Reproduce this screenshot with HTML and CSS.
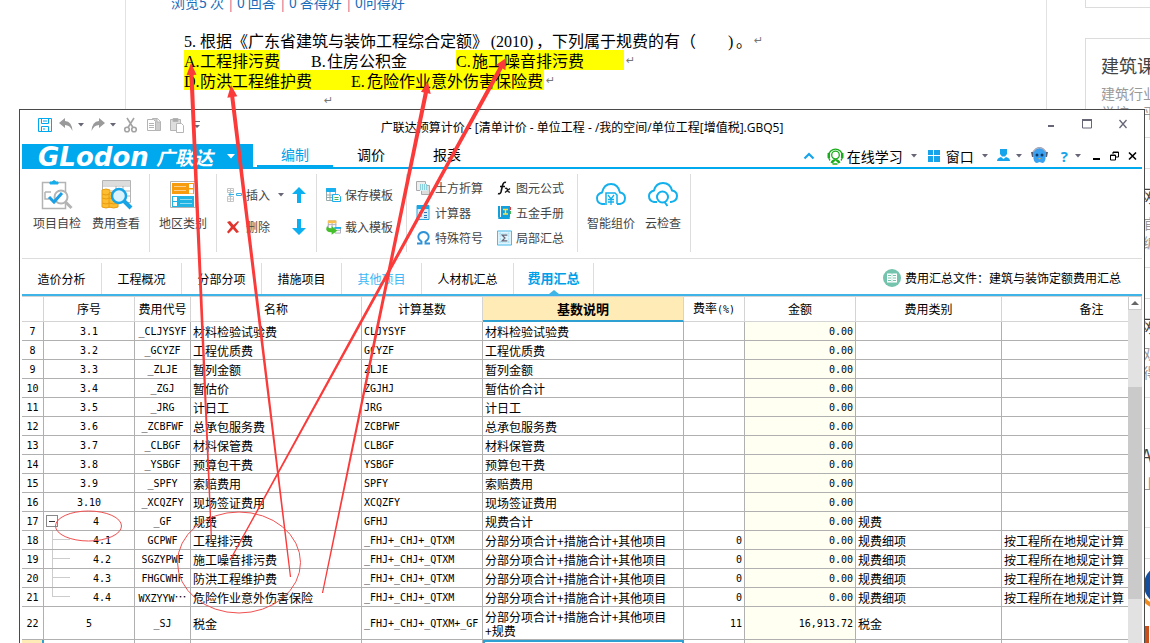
FILE: index.html
```html
<!DOCTYPE html>
<html lang="zh-CN">
<head>
<meta charset="utf-8">
<title>广联达预算计价</title>
<meta name="viewport" content="width=device-width, initial-scale=1">
<link rel="stylesheet" href="styles.css">
</head>
<body>
<div class="desktop">
  <div class="site">
    <main class="article">
      <p class="stats">浏览5 次 <i>|</i> 0 回答 <i>|</i> 0 答得好 <i>|</i> 0问得好</p>
      <div class="question">
        <p class="line"><span><b>5.</b>根据《广东省建筑与装饰工程综合定额》<b class="year">(2010)</b>，下列属于规费的有（</span><span class="blank"></span><span><b class="close">)</b>。</span><em>↵</em></p>
        <p class="line"><mark class="opt-a"><b>A.</b>工程排污费</mark><span class="opt-b"><b>B.</b>住房公积金</span><mark class="opt-c"><b>C.</b>施工噪音排污费</mark><em>↵</em></p>
        <p class="line"><mark class="opt-d"><b>D.</b>防洪工程维护费</mark><mark class="opt-e"><b>E.</b>危险作业意外伤害保险费</mark><em>↵</em></p>
        <p class="line last"><em>↵</em></p>
      </div>
    </main>
    <aside class="sidebar">
      <section class="card first"></section>
      <section class="card"><h2>建筑课堂</h2><p>建筑行业</p><p>学校、平台</p></section>
      <section class="card"><h2>建筑网校</h2><p>建筑行官方</p><p>造价师编</p></section>
      <section class="card"><h2>工程网站</h2><p>工程人双</p><p>学习心得</p></section>
      <section class="card"><h2>软件 A</h2><p>软件行上</p></section>
      <section class="card logo">
        <svg width="60" height="86" viewBox="0 0 60 86"><circle cx="63" cy="26" r="17" fill="none" stroke="#134f9c" stroke-width="6"/><path d="M56 22h10" stroke="#134f9c" stroke-width="3"/><path d="M43 40q6 9 24 9" fill="none" stroke="#f08c1e" stroke-width="4"/><rect x="44" y="67" width="4" height="19" fill="#c8501c"/></svg>
      </section>
    </aside>
  </div>

  <div class="window">
    <header class="titlebar">
      <div class="quick">
        <button aria-label="保存"><svg width="14" height="14" viewBox="0 0 14 14" fill="none" stroke="#00a8ee"><path d="M.5.5h13v13H.5zM3.500.5v5h7v-5M3.500 13.500v-5h7v5M5 3h4M5 11h2" /></svg></button>
        <button aria-label="撤销"><svg width="14" height="14" viewBox="0 0 14 14"><path d="M0 5L6 0v3q7 .5 7.500 10Q11 7 6 7v3z" fill="#9a9a9a"/></svg><svg class="caret" width="6" height="4" viewBox="0 0 6 4"><path d="M0 0h6L3 3.500z"/></svg></button>
        <button aria-label="恢复"><svg width="14" height="14" viewBox="0 0 14 14"><path d="M14 5L8 0v3Q1 3.500.5 13 3 7 8 7v3z" fill="#9a9a9a"/></svg><svg class="caret" width="6" height="4" viewBox="0 0 6 4"><path d="M0 0h6L3 3.500z"/></svg></button>
        <button aria-label="剪切"><svg width="16" height="16" viewBox="0 0 16 16" fill="none" stroke="#a3a3a3" stroke-width="1.600"><path d="M4 1l6 9.500M11 1L5 10.500"/><circle cx="4" cy="12.500" r="2.300"/><circle cx="11" cy="12.500" r="2.300"/></svg></button>
        <button aria-label="复制"><svg width="16" height="16" viewBox="0 0 16 16" fill="#fff" stroke="#b4b4b4"><path d="M6.500 1.500h5l3 3v9h-8z" fill="#ccc"/><path d="M11 1.500v3.500h3.500" /><path d="M1.500 2.500h6l2 2v9h-8zM3 6.500h5M3 8.500h5M3 10.500h5"/></svg></button>
        <button aria-label="粘贴"><svg width="16" height="16" viewBox="0 0 16 16" fill="#ddd" stroke="#b5b5b5"><path d="M1.500 2.500h10v11h-10z"/><path d="M4 1.500h5v3H4z" fill="#aaa"/><path d="M7.500 6.500h5l2 2v7h-7z" fill="#fff"/></svg></button>
        <button aria-label="更多"><svg class="caret" width="8" height="8" viewBox="0 0 8 8"><path d="M2 0h6v1H2zM2 4h6L5 7z"/></svg></button>
      </div>
      <h1>广联达预算计价 - [清单计价 - 单位工程 - /我的空间/单位工程[增值税].GBQ5]</h1>
      <div class="controls">
        <button aria-label="最小化"><svg width="10" height="10" viewBox="0 0 10 10"><path d="M2 6h6v2H2z" fill="#667"/></svg></button>
        <button aria-label="最大化"><svg width="10" height="10" viewBox="0 0 10 10"><path d="M.5 1h9v8h-9z" fill="none" stroke="#667"/><path d="M0 0h10v2H0z" fill="#667"/></svg></button>
        <button aria-label="关闭"><svg width="10" height="10" viewBox="0 0 10 10"><path d="M1.500 1l7 8M8.500 1l-7 8" stroke="#667" stroke-width="1.300"/></svg></button>
      </div>
    </header>

    <nav class="menubar">
      <button class="brand"><span class="latin">GLodon</span><span class="han">广联达</span><svg width="8" height="5" viewBox="0 0 8 5"><path d="M0 0h8L4 4.500z" fill="#fff"/></svg></button>
      <button class="menu-tab active">编制</button><button class="menu-tab">调价</button><button class="menu-tab">报表</button>
      <div class="tools">
        <button class="fold" aria-label="收起"><svg width="12" height="8" viewBox="0 0 12 8"><path d="M1.500 6.500L6 2l4.500 4.500" fill="none" stroke="#18a4ea" stroke-width="2.200"/></svg></button>
        <button class="study"><svg width="17" height="18" viewBox="0 0 17 18" fill="none" stroke="#1cab1c"><path d="M3 13.500A7 7 0 1 1 14 13.500" stroke-width="1.400"/><circle cx="8.500" cy="8" r="3.800" stroke-width="1.300"/><path d="M1.800 6v5M15.200 6v5" stroke-width="2.500"/><path d="M3.500 15.500q1.500-3.500 5-3.500t5 3.500l-2 1-3-3-3 3z" fill="#1cab1c" stroke="none"/><path d="M5.500 17h5" stroke-width="1.500"/></svg>在线学习<svg class="caret" width="6" height="4" viewBox="0 0 6 4"><path d="M0 0h6L3 3.500z"/></svg></button>
        <button class="win"><svg width="12" height="12" viewBox="0 0 12 12" fill="#18a4ea"><path d="M0 0h5v5H0zM6 0h6v5H6zM0 6h5v6H0zM6 6h6v6H6z"/></svg>窗口<svg class="caret" width="6" height="4" viewBox="0 0 6 4"><path d="M0 0h6L3 3.500z"/></svg></button>
        <button class="user" aria-label="用户"><svg width="13" height="13" viewBox="0 0 13 13" fill="#18a4ea"><path d="M3 0h7v5L8 7.500H5L3 5zM0 12q0-3 4-4l2.500 2L9 8q4 1 4 4z"/></svg><svg class="caret" width="6" height="4" viewBox="0 0 6 4"><path d="M0 0h6L3 3.500z"/></svg></button>
        <button aria-label="助手"><svg width="17" height="17" viewBox="0 0 17 17"><path d="M2.500 4q6-6 12 0v8q-1 4-3 4L8.500 15 6 16q-2.500 0-3.500-4z" fill="#3aa0f0"/><path d="M2 5q6.500-9 13 0" fill="none" stroke="#aab" stroke-width="1.500"/><path d="M0 5h2.500v5H1zM14.500 5H17l-1 5h-1.500z" fill="#58617a"/><circle cx="6" cy="8" r="1.500" fill="#123a66"/><circle cx="11" cy="8" r="1.500" fill="#123a66"/><path d="M7 11h3l-1.500 1.500z" fill="#f6a820"/></svg></button>
        <button class="help" aria-label="帮助">?<svg class="caret" width="6" height="4" viewBox="0 0 6 4"><path d="M0 0h6L3 3.500z"/></svg></button>
        <button aria-label="最小化文档"><svg width="9" height="10" viewBox="0 0 9 10"><path d="M1 7h7v2H1z"/></svg></button>
        <button aria-label="还原文档"><svg width="9" height="10" viewBox="0 0 9 10" fill="none" stroke="#000"><path d="M3 3V1h5.500v5H6M3 1.500h5M.5 4h5v5h-5zM.5 4.500h5"/></svg></button>
        <button aria-label="关闭文档"><svg width="9" height="10" viewBox="0 0 9 10"><path d="M1 1.500l7 7M8 1.500l-7 7" stroke="#000" stroke-width="1.600"/></svg></button>
      </div>
    </nav>

    <div class="ribbon">
      <div class="group g-check">
        <button class="big"><svg width="34" height="32" viewBox="0 0 34 32" fill="none"><path d="M2.500 4.500h23v26h-23z" fill="#fff" stroke="#b4b4b4" stroke-width="1.500"/><path d="M10 6V4h2q2-3 4 0h2v2z" fill="#16aeea" stroke="#16aeea"/><path d="M5 14h6M5 14v7h4" stroke="#b4b4b4" stroke-width="1.500"/><circle cx="21" cy="19" r="6.500" fill="#fff" stroke="#b4b4b4" stroke-width="2"/><path d="M25.500 24l6 6" stroke="#b4b4b4" stroke-width="3"/><path d="M9 19l5 5 8-9" stroke="#1b9fe6" stroke-width="3"/></svg>项目自检</button>
        <button class="big"><svg width="34" height="32" viewBox="0 0 34 32" fill="none"><path d="M3.500 2.500h28v22h-28z" fill="#fff" stroke="#b4b4b4"/><path d="M4 3h27v4H4z" fill="#ddd"/><path d="M3 8h28M12 13h19M12 18h19M17 8v16M24 8v16" stroke="#b4b4b4"/><g fill="#fdbd31" stroke="#e89c10"><path d="M3 12q4-2 8 0v17q-4 2-8 0z"/><path d="M10 15q5-2 9 0v14q-4 2-9 0z"/><path d="M3 16q4 2 8 0M3 20q4 2 8 0M3 25q4 2 8 0M10 20q5 2 9 0M10 25q5 2 9 0"/></g><circle cx="20" cy="18" r="7" fill="#d9f2fc" stroke="#16a4e6" stroke-width="2.500"/><path d="M25 23l7 7" stroke="#16a4e6" stroke-width="4"/></svg>费用查看</button>
      </div>
      <div class="group g-area">
        <button class="big"><svg width="28" height="32" viewBox="0 0 28 32"><path d="M1.500 3.500h25v26h-25z" fill="#fff" stroke="#b4b4b4"/><path d="M3 5h22v11H3z" fill="#f79d0d"/><path d="M5 8.500h12M5 12.500h12" stroke="#fdd08a"/><path d="M20 6h4v4h-4zM20 11.500h4v4h-4z" fill="#fff"/><path d="M3 18h22v11H3z" fill="#1fb4e4"/><path d="M11 21.500h12M11 25.500h12" stroke="#8fdcf2"/><path d="M4 19h4v4H4zM4 24h4v4H4z" fill="#fff"/></svg>地区类别</button>
      </div>
      <div class="group g-edit">
        <button class="small"><svg width="16" height="16" viewBox="0 0 16 16" fill="none"><path d="M1.500 1.500h6v4h-6zM1.500 9.500h6v5h-6zM4.500 1v4M4.500 10v5M1 3.500h6M1 12h6" stroke="#c4c4c4"/><path d="M3 7.500h5M5 5.500L3 7.500l2 2M10.500 6.500h5v2h-5z" stroke="#36b2e8"/></svg>插入<svg class="caret" width="6" height="4" viewBox="0 0 6 4"><path d="M0 0h6L3 3.500z"/></svg></button>
        <button class="small" aria-label="上移"><svg width="14" height="16" viewBox="0 0 14 16"><path d="M7 0l7 7H9v9H5V7H0z" fill="#0cb0f0"/></svg></button>
        <button class="small"><svg width="16" height="16" viewBox="0 0 16 16"><path d="M1 3l3-1 3.500 4L12 2l1 1-4 5 4 5-2.500 1L7 10l-4.500 4.500L1 13l4-5z" fill="#e0342c"/></svg>删除</button>
        <button class="small" aria-label="下移"><svg width="14" height="16" viewBox="0 0 14 16"><path d="M7 16l7-7H9V0H5v9H0z" fill="#0cb0f0"/></svg></button>
      </div>
      <div class="group g-template">
        <button class="small"><svg width="15" height="16" viewBox="0 0 15 16" fill="#fff" stroke="#9aa"><path d="M.5 1.500h9v12h-9zM.5 8h9M.5 10.500h9M4 2v12"/><path d="M.5 1.500h9v3h-9z" fill="#18b0ee" stroke="#18b0ee"/><path d="M6.500 7.500h6l2 2v5h-8z" stroke="#18b0ee"/><path d="M8.500 10.500h4M8.500 12.500h4" stroke="#4ab44a"/></svg>保存模板</button>
        <button class="small"><svg width="15" height="16" viewBox="0 0 16 16" fill="#fff" stroke="#aab"><path d="M2.500 1.500h8v8h-8zM2 5.500h9M6.500 2v8"/><path d="M2 1h9v3H2z" fill="#f8c04c" stroke="none"/><path d="M9.500 8.500h6v6h-6zM9.500 11.500h6"/><path d="M9 8h7v2H9z" fill="#18b0ee" stroke="none"/><path d="M1.500 6q0 3.500 4.500 3.500V7l6 5-6 4.300v-2.800Q-2.500 14 1.500 6z" fill="#45c02c" stroke="none"/></svg>载入模板</button>
      </div>
      <div class="group g-utils">
        <button class="small"><svg width="15" height="16" viewBox="0 0 15 16"><path d="M.5 1.500h9v9h-9z" fill="#eee" stroke="#aaa"/><path d="M5.500 5.500h8v9h-8z" fill="#ddd" stroke="#aaa"/><path d="M4 4h7v7H4z" fill="#d8f0f4"/><path d="M4 5h7M4 7h7M4 9h7" stroke="#3fb0c4" stroke-dasharray="1 1"/></svg>土方折算</button>
        <button class="small"><svg width="15" height="15" viewBox="0 0 15 15"><path d="M1 .5h12v14h-12z" fill="#d8f0fb" stroke="#2ca4de"/><path d="M1 0h12v4H1z" fill="#18a8e4"/><path d="M3 7.500h3M8 7.500h3M3 11h3M8 10.500h3M8 12.500h3" stroke="#3276b8"/></svg>计算器</button>
        <button class="small"><svg width="15" height="14" viewBox="0 0 15 14"><path d="M1 12.500h4.500v-2Q1.500 8 2.500 4.500 4 1 7.500 1t5 3.500q1 3.500-3 6v2H14" fill="none" stroke="#2f92d6" stroke-width="1.900"/></svg>特殊符号</button>
        <button class="small"><svg width="15" height="14" viewBox="0 0 15 14" fill="none" stroke="#111"><path d="M9 1.500q-2.500-1-3.500 3L4 11q-1 2.500-3 1.500M3 5.500h5" stroke-width="1.600"/><path d="M8 7.500q2-1 2.500 1.500t2.500 2M13 7.500l-5 4" stroke-width="1.300"/></svg>图元公式</button>
        <button class="small"><svg width="15" height="15" viewBox="0 0 15 15"><path d="M1 1h12v11H1z" fill="#12a0dc"/><path d="M1.500 12.500h11v1h-11z" fill="#fff" stroke="#12a0dc"/><path d="M3.500 1v11" stroke="#fff"/><path d="M6 4.500h5M8.500 4v5M6 9h5" fill="none" stroke="#ffe14a" stroke-width="1.300"/><path d="M13 2h1v3h-1z" fill="#e33"/><path d="M13 6h1v3h-1z" fill="#4b4"/></svg>五金手册</button>
        <button class="small"><svg width="15" height="16" viewBox="0 0 16 16"><path d="M.5.500h15v15H.5z" fill="#dff4fc" stroke="#3cb4e8"/><path d="M2 3.500h12M2 12.500h12M3.500 2v12M12.500 2v12" stroke="#a9dff5" stroke-dasharray="2 1"/><path d="M11 5H5.500L8.500 8l-3 3H11" fill="none" stroke="#667" stroke-width="1.300"/></svg>局部汇总</button>
      </div>
      <div class="group g-cloud">
        <button class="big"><svg width="32" height="32" viewBox="0 0 32 32" fill="none" stroke="#12b0ec" stroke-width="1.900"><path d="M10 26H7q-5-1-5-6 0-4 5-5.500Q9 6 16 6t9 8.500q5 1 5 5.500 0 5-5 6h-3"/><path d="M11 27V15h9l2 2v9" stroke-width="1.500"/><path d="M13 17l3 4 3-4M16 21v6M13 21.500h6M13 24h6" stroke-width="1.300"/></svg>智能组价</button>
        <button class="big"><svg width="32" height="32" viewBox="0 0 32 32" fill="none" stroke="#12b0ec" stroke-width="2"><path d="M10 24H7q-5-1-5-6 0-4 5-5.500Q9 5 16 5t9 7.500q5 1 5 5.500 0 5-6 6h-1"/><circle cx="15.500" cy="19" r="5.500"/><path d="M17.500 24l3 4"/></svg>云检查</button>
      </div>
    </div>

    <nav class="doc-tabs">
      <button>造价分析</button><button>工程概况</button><button>分部分项</button><button>措施项目</button><button class="linked">其他项目</button><button class="wide">人材机汇总</button><button class="current">费用汇总</button>
      <div class="file"><svg width="18" height="18" viewBox="0 0 18 18"><circle cx="9" cy="9" r="9" fill="#74c3ac"/><path d="M4 4.500h4.500L9 5l.5-.5H14v9H9.500L9 14l-.5-.5H4z" fill="#fff"/><path d="M5 6.500h3M5 9h3M5 11.500h3M10 6.500h3M10 9h3M10 11.500h3" stroke="#74c3ac"/><path d="M9 5v9" stroke="#b5dfd3" stroke-width=".8"/></svg>费用汇总文件：建筑与装饰定额费用汇总</div>
    </nav>

    <div class="sheet">
      <div class="grid">
        <table>
          <colgroup><col class="c-no"><col class="c-seq"><col class="c-code"><col class="c-name"><col class="c-base"><col class="c-desc"><col class="c-rate"><col class="c-sum"><col class="c-kind"><col class="c-note"></colgroup>
          <thead><tr><th></th><th>序号</th><th>费用代号</th><th>名称</th><th>计算基数</th><th class="picked">基数说明</th><th>费率<span class="mono">(%)</span></th><th>金额</th><th>费用类别</th><th>备注</th></tr></thead>
          <tbody>
            <tr><th>7</th><td>3.1</td><td>_CLJYSYF</td><td>材料检验试验费</td><td>CLJYSYF</td><td>材料检验试验费</td><td></td><td>0.00</td><td></td><td></td></tr>
            <tr><th>8</th><td>3.2</td><td>_GCYZF</td><td>工程优质费</td><td>GCYZF</td><td>工程优质费</td><td></td><td>0.00</td><td></td><td></td></tr>
            <tr><th>9</th><td>3.3</td><td>_ZLJE</td><td>暂列金额</td><td>ZLJE</td><td>暂列金额</td><td></td><td>0.00</td><td></td><td></td></tr>
            <tr><th>10</th><td>3.4</td><td>_ZGJ</td><td>暂估价</td><td>ZGJHJ</td><td>暂估价合计</td><td></td><td>0.00</td><td></td><td></td></tr>
            <tr><th>11</th><td>3.5</td><td>_JRG</td><td>计日工</td><td>JRG</td><td>计日工</td><td></td><td>0.00</td><td></td><td></td></tr>
            <tr><th>12</th><td>3.6</td><td>_ZCBFWF</td><td>总承包服务费</td><td>ZCBFWF</td><td>总承包服务费</td><td></td><td>0.00</td><td></td><td></td></tr>
            <tr><th>13</th><td>3.7</td><td>_CLBGF</td><td>材料保管费</td><td>CLBGF</td><td>材料保管费</td><td></td><td>0.00</td><td></td><td></td></tr>
            <tr><th>14</th><td>3.8</td><td>_YSBGF</td><td>预算包干费</td><td>YSBGF</td><td>预算包干费</td><td></td><td>0.00</td><td></td><td></td></tr>
            <tr><th>15</th><td>3.9</td><td>_SPFY</td><td>索赔费用</td><td>SPFY</td><td>索赔费用</td><td></td><td>0.00</td><td></td><td></td></tr>
            <tr><th>16</th><td>3.10</td><td>_XCQZFY</td><td>现场签证费用</td><td>XCQZFY</td><td>现场签证费用</td><td></td><td>0.00</td><td></td><td></td></tr>
            <tr><th>17</th><td class="node"><div class="tree"><button class="toggle" aria-label="折叠"></button><span>4</span></div></td><td>_GF</td><td>规费</td><td>GFHJ</td><td>规费合计</td><td></td><td>0.00</td><td>规费</td><td></td></tr>
            <tr><th>18</th><td class="node"><div class="tree"><i class="branch"></i><span>4.1</span></div></td><td>GCPWF</td><td>工程排污费</td><td>_FHJ+_CHJ+_QTXM</td><td>分部分项合计+措施合计+其他项目</td><td>0</td><td>0.00</td><td>规费细项</td><td>按工程所在地规定计算</td></tr>
            <tr><th>19</th><td class="node"><div class="tree"><i class="branch"></i><span>4.2</span></div></td><td>SGZYPWF</td><td>施工噪音排污费</td><td>_FHJ+_CHJ+_QTXM</td><td>分部分项合计+措施合计+其他项目</td><td>0</td><td>0.00</td><td>规费细项</td><td>按工程所在地规定计算</td></tr>
            <tr><th>20</th><td class="node"><div class="tree"><i class="branch"></i><span>4.3</span></div></td><td>FHGCWHF</td><td>防洪工程维护费</td><td>_FHJ+_CHJ+_QTXM</td><td>分部分项合计+措施合计+其他项目</td><td>0</td><td>0.00</td><td>规费细项</td><td>按工程所在地规定计算</td></tr>
            <tr><th>21</th><td class="node"><div class="tree"><i class="branch end"></i><span>4.4</span></div></td><td>WXZYYW<span class="dots">…</span></td><td>危险作业意外伤害保险</td><td>_FHJ+_CHJ+_QTXM</td><td>分部分项合计+措施合计+其他项目</td><td>0</td><td>0.00</td><td>规费细项</td><td>按工程所在地规定计算</td></tr>
            <tr class="tall"><th>22</th><td>5</td><td>_SJ</td><td>税金</td><td>_FHJ+_CHJ+_QTXM+_GF</td><td>分部分项合计+措施合计+其他项目<br>+规费</td><td>11</td><td>16,913.72</td><td>税金</td><td></td></tr>
            <tr class="selected"><th></th><td></td><td></td><td></td><td></td><td></td><td></td><td></td><td></td><td></td></tr>
          </tbody>
        </table>
      </div>
      <div class="scrollbar">
        <button aria-label="向上滚动"><svg width="8" height="4" viewBox="0 0 8 4"><path d="M0 4l4-4 4 4z" fill="#666"/></svg></button>
        <div class="thumb"></div>
      </div>
    </div>
  </div>

  <svg class="marks" width="1150" height="643" viewBox="0 0 1150 643">
    <g fill="#fb3a3a">
      <path d="M191 63L196.500 74.800 193.600 75 212.100 541H210.900L189.400 75 186.500 75.200z"/>
      <path d="M231 85L237.300 96.300 234.300 96.800 291.100 577H289.900L230.300 97.300 227.300 97.700z"/>
      <path d="M428 82L430.700 93.900 427.900 93.300 323.100 593H321.900L423.800 92.400 420.900 91.700z"/>
      <path d="M506 58L505.500 70.300 502.600 68.600 230.600 560.500 229.500 560 498.900 66.600 496 65z"/>
    </g>
    <g fill="none" stroke="#f05050"><ellipse cx="88.500" cy="526" rx="33" ry="15"/><ellipse cx="239" cy="562.500" rx="61.500" ry="50.500"/></g>
  </svg>
</div>
</body>
</html>
```
FILE: styles.css
```css
* { box-sizing: border-box; }
body { margin: 0; background: #fff; color: #000; font: 12px/14px "Noto Sans CJK SC", sans-serif; overflow: hidden; }
h1, h2, p { margin: 0; font-weight: normal; }
button { padding: 0; border: 0; background: none; color: inherit; font: inherit; white-space: nowrap; }
svg { flex: none; }
.desktop { position: relative; height: 100vh; overflow: hidden; }
.caret { fill: #667; }

/* page behind the window */
.site { display: flex; height: 100%; padding-left: 125px; }
.article { flex: 1; border: solid #e2e2e2; border-width: 0 1px; white-space: nowrap; }
.stats { margin-top: -9px; padding-left: 45px; color: #1b6db9; font-size: 14px; line-height: 22px; }
.stats i { padding: 0 1px 0 2px; color: #c65b8e; font-style: normal; }
.question { padding: 17px 0 0 58px; font-size: 16px; }
.line { display: flex; height: 20px; line-height: 20px; }
.line b { display: inline-block; min-width: 16px; font: 16px/20px "Liberation Serif", serif; }
.line .year { min-width: 48px; text-align: center; }
.line .close { min-width: 8px; }
.line em { padding-left: 2px; color: #777; font: 11px/22px "DejaVu Sans", sans-serif; }
.line mark { background: #ff0; color: inherit; }
.blank { width: 32px; }
.opt-a { width: 96px; margin-right: 31px; }
.opt-b { width: 145px; }
.opt-c { width: 168px; }
.opt-d { width: 167px; }
.opt-e { width: 193px; }
.last { padding-left: 138px; }
.sidebar { width: 103px; padding-left: 38px; white-space: nowrap; overflow: hidden; }
.card { width: 200px; height: 100px; margin-bottom: 30px; padding: 15px; border: 1px solid #dcdcdc; }
.card.first { margin-top: -92px; }
.card h2 { margin-bottom: 8px; color: #444; font-size: 18px; line-height: 22px; }
.card p { color: #999; font-size: 14px; line-height: 19px; }
.card.logo { padding: 0 0 0 15px; }

/* application window */
.window { position: absolute; top: 109px; right: 5px; bottom: 0; left: 19px; display: flex; flex-direction: column; padding: 0 2px; border: 1px solid #4a4a4a; border-bottom: 0; background: #fff; }
.titlebar { display: grid; grid-template-columns: 1fr auto 1fr; align-items: center; height: 34px; }
.titlebar h1 { padding-top: 1px; font-family: "Open Sans", "Noto Sans CJK SC", sans-serif; font-size: 12px; line-height: 18px; }
.quick { display: flex; align-items: center; gap: 7px; padding: 0 0 4px 16px; }
.quick button { display: flex; align-items: center; gap: 5px; }
.controls { display: flex; justify-content: flex-end; gap: 26px; padding: 0 14px 6px 0; }
.controls svg { display: block; }
.menubar { display: flex; height: 25px; border-bottom: 2px solid #00a8ee; font-size: 14px; }
.brand { display: flex; align-items: center; width: 231px; margin: 0 4px -2px 0; padding-left: 16px; background: #00a8ee; color: #fff; }
.brand .latin { width: 118px; text-align: left; font: italic bold 26px/24px "DejaVu Sans", sans-serif; }
.brand .han { width: 71px; text-align: left; font-size: 19px; font-style: italic; font-weight: bold; line-height: 22px; }
.menu-tab { width: 76px; margin-bottom: -2px; padding-bottom: 1px; border-bottom: 4px solid transparent; }
.menu-tab.active { border-color: #00a8ee; color: #00a0e8; }
.tools { display: flex; align-items: center; gap: 9px; margin-left: auto; padding-right: 5px; }
.tools button { display: flex; align-items: center; gap: 3px; line-height: 20px; }
.tools .caret { margin-left: 5px; }
.tools .fold { margin-right: 3px; }
.tools .win { gap: 6px; }
.tools .win .caret { margin-left: 2px; }
.tools .study { margin-right: 2px; }
.tools .user .caret { margin-left: 3px; }
.tools .help { margin: 0 2px 0 4px; gap: 2px; color: #18a4ea; font: bold 15px/18px "Open Sans", sans-serif; }
.ribbon { display: flex; height: 90px; padding: 5px 0 6px; border-bottom: 1px solid #ddd; color: #444; }
.group { border-right: 1px solid #ddd; }
.big { display: flex; flex-direction: column; align-items: center; gap: 4px; line-height: 18px; }
.small { display: flex; align-items: center; gap: 4px; line-height: 18px; }
.g-check, .g-area, .g-cloud { display: flex; padding-top: 4px; }
.g-check { width: 128px; gap: 11px; padding-left: 11px; }
.g-area { width: 67px; padding-left: 9px; }
.g-edit { display: grid; grid-template: 32px 32px / 66px 14px; align-content: start; width: 100px; padding: 5px 0 0 9px; }
.g-edit .caret { margin-left: 4px; }
.g-template { display: grid; grid-template-rows: 32px 32px; align-content: start; width: 90px; padding: 5px 0 0 9px; }
.g-utils { display: grid; grid-template: 25px 25px 25px / 81px 80px; grid-auto-flow: column; align-content: start; width: 171px; padding: 1px 0 0 9px; }
.g-cloud { width: 113px; gap: 10px; padding-left: 9px; }
.doc-tabs { display: flex; height: 37px; padding-top: 4px; border-bottom: 2px solid #3fb4e6; }
.doc-tabs button { width: 80px; border-right: 1px solid #ddd; }
.doc-tabs .wide { width: 92px; }
.doc-tabs .linked { color: #3db8f5; }
.doc-tabs .current { position: relative; padding-bottom: 2px; color: #00a0e8; font-size: 13px; font-weight: bold; }
.doc-tabs .current::after { content: ""; position: absolute; bottom: 0; left: 50%; margin-left: -5px; border: 5px solid transparent; border-top: 0; border-bottom: 4px solid #3fb4e6; }
.file { display: flex; align-items: center; gap: 4px; margin-left: auto; padding: 0 21px 2px 0; }

/* cost table */
.sheet { display: flex; flex: 1; min-height: 0; }
.grid { flex: 1; min-width: 0; overflow: hidden; }
table { width: 1160px; table-layout: fixed; border-spacing: 0; }
.c-no { width: 22px; } .c-seq { width: 91px; } .c-code { width: 56px; } .c-name { width: 171px; } .c-base { width: 121px; }
.c-desc { width: 201px; } .c-rate { width: 61px; } .c-sum { width: 111px; } .c-kind { width: 146px; } .c-note { width: 180px; }
th, td { height: 19px; padding: 2px 2px 0; border: solid #b0b0b0; border-width: 0 1px 1px 0; white-space: nowrap; text-align: left; font-weight: normal; }
thead th { height: 26px; padding: 0; border-top: 1px solid #d4d4d4; border-color: #d4d4d4; text-align: center; }
thead .picked { border-bottom: 2px solid #2fa0d2; background: #ffebb5; font-size: 13px; font-weight: bold; }
tbody th, td:nth-child(2), td:nth-child(3), td:nth-child(5), td:nth-child(7), td:nth-child(8), .mono { font-family: "DejaVu Sans Mono", monospace; font-size: 10px; }
tbody th, td:nth-child(2), td:nth-child(3) { padding: 2px 0 0; text-align: center; }
td:nth-child(7), td:nth-child(8) { text-align: right; }
td:nth-child(8) { background: #fffff2; }
.tall td, .tall th { height: 33px; }
.dots { font: 12px/14px "Noto Sans CJK SC", sans-serif; }
tbody td.node { padding: 0; }
.tree { display: flex; align-items: center; height: 18px; }
.tree span { flex: 1; padding-top: 2px; }
.toggle { width: 12px; height: 12px; margin-left: 2px; border: 1px solid #888; background: linear-gradient(#333, #333) center / 6px 1px no-repeat; }
.branch { width: 26px; height: 18px; background: linear-gradient(#ccc, #ccc) 8px 0 / 1px 18px no-repeat, linear-gradient(#ccc, #ccc) 8px 8px / 18px 1px no-repeat; }
.branch.end { background-size: 1px 9px, 18px 1px; }
.selected th { background: #ffebb5; border-right: 2px solid #2fa0d2; }
.selected td:nth-child(6) { border: solid #2fa0d2; border-width: 2px 2px 0; }
.scrollbar { width: 14px; background: #e2e2e2; }
.scrollbar button { display: flex; align-items: center; justify-content: center; width: 14px; height: 14px; border: 1px solid #ccc; background: #fff; }
.thumb { height: 61%; margin-top: 77px; background: #cacaca; }

/* hand-drawn annotations */
.marks { position: absolute; top: 0; left: 0; pointer-events: none; }
```
